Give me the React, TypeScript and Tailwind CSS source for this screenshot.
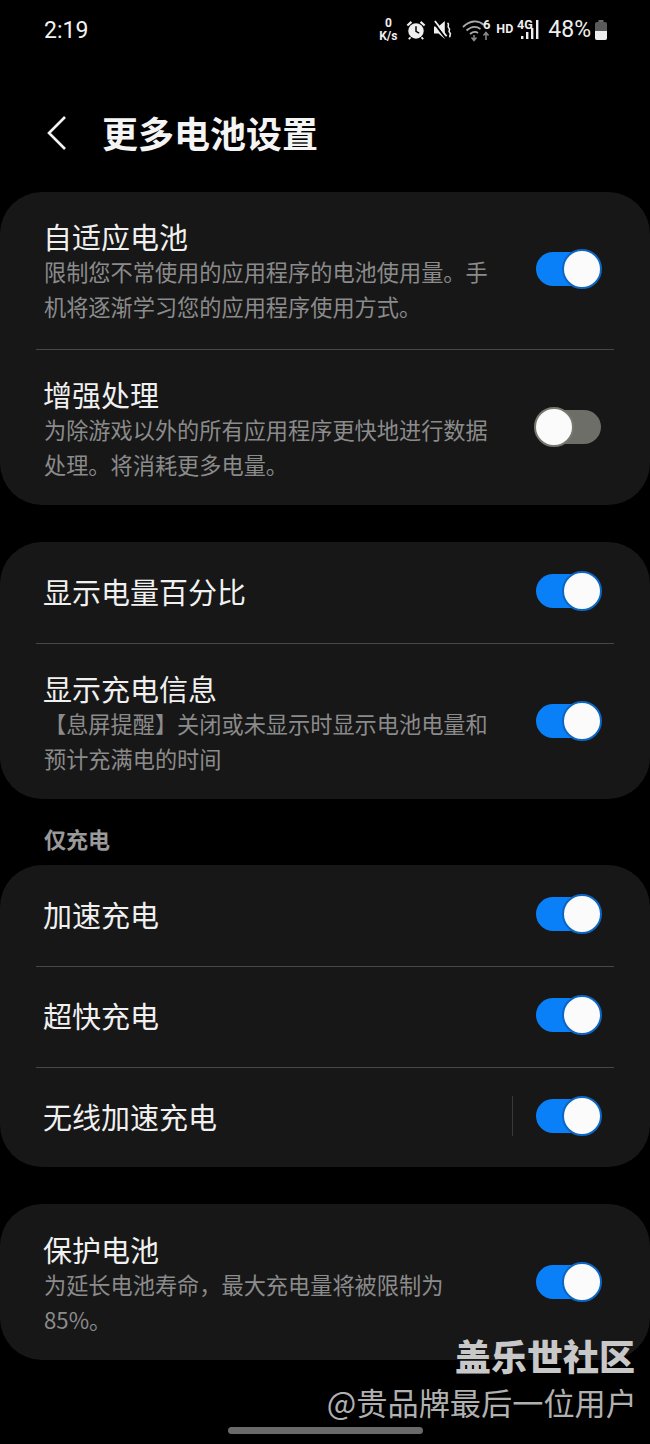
const cjk = "font-['Noto_Sans_CJK_SC','Noto_Sans',sans-serif]";

function Toggle({ on = true }: { on?: boolean }) {
  if (on) {
    return (
      <div className="relative h-[34px] w-[65px] rounded-full bg-[#0a80f8]">
        <div className="absolute right-[-1px] top-[-3px] h-[40px] w-[40px] rounded-full border-[2px] border-[#0b66c4] bg-[#fbfbfb]" />
      </div>
    );
  }
  return (
    <div className="relative h-[34px] w-[65px] rounded-full bg-[#6e6e68]">
      <div className="absolute left-[-2px] top-[-3px] h-[40px] w-[40px] rounded-full border-[2px] border-[#77776f] bg-[#fbfbfb]" />
    </div>
  );
}

function Row({
  title,
  desc,
  on = true,
  bar = false,
}: {
  title: string;
  desc?: string;
  on?: boolean;
  bar?: boolean;
}) {
  return (
    <div className="flex items-center pl-[44px] pr-[49px]">
      <div className="min-w-0 flex-1">
        <div className="-ml-[1px] text-[29px] leading-[36px] text-[#f0f0f0]">{title}</div>
        {desc ? <div className="w-[450px] text-[22.2px] leading-[35px] text-[#8b8b8b]">{desc}</div> : null}
      </div>
      {bar ? <div className="-my-[2px] mr-[23px] h-[40px] w-px bg-[#3a3a3a]" /> : null}
      <div className={desc ? "mb-[4px] shrink-0" : "shrink-0"}>
        <Toggle on={on} />
      </div>
    </div>
  );
}

function Divider() {
  return <div className="mx-[36px] h-px bg-[#474747]" />;
}

function StatusIcons() {
  return (
    <div className="flex items-center text-[#efefef]">
      <div className="mr-[9px] flex w-[18px] flex-col items-center font-['Roboto',sans-serif] text-[12px] font-bold leading-[13px]">
        <span>0</span>
        <span>K/s</span>
      </div>
      <svg width="20" height="20" viewBox="0 0 22 22" className="mr-[8px]">
        <circle cx="11" cy="12" r="8.500" fill="#efefef" />
        <path d="M11 7v5.500l3.500 2" stroke="#000" strokeWidth="1.600" fill="none" />
        <path d="M1.500 6 6 2M20.500 6 16 2" stroke="#efefef" strokeWidth="2.400" />
        <path d="M5 19l-2 2M17 19l2 2" stroke="#efefef" strokeWidth="2" />
      </svg>
      <svg width="18" height="20" viewBox="0 0 20 22" className="mr-[10px]">
        <path d="M0 7h5l7-6v20l-7-6H0z" fill="#efefef" />
        <path d="M0 3l13 17" stroke="#000" strokeWidth="2.400" />
        <path d="M1 1l13 17" stroke="#efefef" strokeWidth="2" />
        <path d="M15 3c3 2-1 4 1.500 6s-1.500 3 1 5-1.500 3 .5 5" stroke="#efefef" strokeWidth="1.800" fill="none" />
      </svg>
      <svg width="34" height="24" viewBox="0 0 34 24">
        <path d="M1 9c7-7 15-7 21-2M4.500 12.500c5-4.500 10-4.500 14-1.500M8 16c3-2.500 6-2.500 8-1" stroke="#a9a9a9" strokeWidth="1.800" fill="none" />
        <path d="M12 17v5M9.500 19.500 12 22.500l2.500-3" stroke="#8a8a8a" strokeWidth="1.500" fill="none" />
        <path d="M24 22v-7M21.500 17.500 24 14.500l2.500 3" stroke="#8a8a8a" strokeWidth="1.500" fill="none" />
        <text x="21" y="11" fill="#efefef" fontSize="13" fontWeight="700" fontFamily="Roboto, sans-serif">6</text>
      </svg>
      <span className="mr-[4px] font-['Roboto',sans-serif] text-[12.5px] font-bold">HD</span>
      <svg width="23" height="24" viewBox="0 0 23 24" className="mr-[8px]">
        <text x="0" y="11" fill="#efefef" fontSize="12.500" fontWeight="700" fontFamily="Roboto, sans-serif">4G</text>
        <rect x="4" y="18" width="2.400" height="3" fill="#efefef" />
        <rect x="9" y="14" width="2.400" height="7" fill="#efefef" />
        <rect x="14" y="10" width="2.400" height="11" fill="#efefef" />
        <rect x="19" y="2" width="2.400" height="19" fill="#efefef" />
      </svg>
      <span className="mr-[3px] font-['Roboto',sans-serif] text-[23px] leading-none">48%</span>
      <svg width="14" height="20" viewBox="0 0 14 20">
        <path d="M4.500 0h5v2h-5z" fill="#6a6a6a" />
        <rect x="1" y="2" width="12" height="18" rx="2" fill="#5a5a5a" />
        <path d="M1 11h12v7a2 2 0 0 1-2 2H3a2 2 0 0 1-2-2z" fill="#efefef" />
      </svg>
    </div>
  );
}

export default function App() {
  return (
    <div className={`relative h-[1444px] w-[650px] overflow-hidden bg-black ${cjk}`}>
      <div className="flex h-[59px] items-center justify-between pl-[44px] pr-[42px]">
        <span className="mt-[3px] font-['Roboto',sans-serif] text-[23px] text-[#f2f2f2]">2:19</span>
        <StatusIcons />
      </div>

      <div className="flex h-[133px] items-center pl-[47px] pt-[15px]">
        <svg width="20" height="34" viewBox="0 0 20 34" fill="none">
          <path d="M18 1 2 17l16 16" stroke="#f2f2f2" strokeWidth="2.600" />
        </svg>
        <h1 className="mb-[2px] ml-[35px] text-[36px] font-semibold leading-none text-[#f4f4f4]">更多电池设置</h1>
      </div>

      <div className="rounded-[42px] bg-[#171717]">
        <div className="pb-[25px] pt-[26px]">
          <Row title="自适应电池" desc="限制您不常使用的应用程序的电池使用量。手机将逐渐学习您的应用程序使用方式。" />
        </div>
        <Divider />
        <div className="pb-[23px] pt-[26px]">
          <Row title="增强处理" desc="为除游戏以外的所有应用程序更快地进行数据处理。将消耗更多电量。" on={false} />
        </div>
      </div>

      <div className="mt-[37px] rounded-[42px] bg-[#171717]">
        <div className="pb-[34px] pt-[31px]">
          <Row title="显示电量百分比" />
        </div>
        <Divider />
        <div className="pb-[23px] pt-[26px]">
          <Row title="显示充电信息" desc="【息屏提醒】关闭或未显示时显示电池电量和预计充满电的时间" />
        </div>
      </div>

      <div className="flex h-[66px] items-center pl-[44px] pt-[12px] text-[22px] font-semibold text-[#9a9a9a]">仅充电</div>

      <div className="rounded-[42px] bg-[#171717]">
        <div className="pb-[34px] pt-[31px]">
          <Row title="加速充电" />
        </div>
        <Divider />
        <div className="pb-[34px] pt-[30px]">
          <Row title="超快充电" />
        </div>
        <Divider />
        <div className="pb-[33px] pt-[30px]">
          <Row title="无线加速充电" bar />
        </div>
      </div>

      <div className="mt-[37px] rounded-[42px] bg-[#171717]">
        <div className="pb-[23px] pt-[27px]">
          <Row title="保护电池" desc="为延长电池寿命，最大充电量将被限制为85%。" />
        </div>
      </div>

      <div className="absolute right-[13px] top-[1333px] flex flex-col items-end">
        <div className="mr-[2px] text-[36px] font-black leading-[44px] text-[#c8c8c8]">盖乐世社区</div>
        <div className="mt-[3px] text-[31.200px] leading-[44px] text-[#b0b0b0]">@贵品牌最后一位用户</div>
      </div>

      <div className="absolute left-[228px] top-[1427px] h-[7px] w-[195px] rounded-full bg-[#6a6a6a]" />
    </div>
  );
}
